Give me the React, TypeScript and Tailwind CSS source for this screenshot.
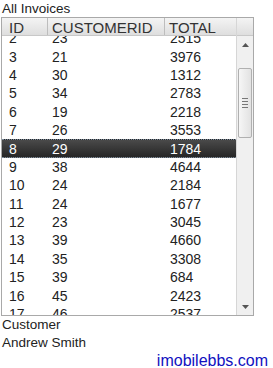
import React from 'react';

const rows: [number, number, number][] = [
  [2, 23, 2515],
  [3, 21, 3976],
  [4, 30, 1312],
  [5, 34, 2783],
  [6, 19, 2218],
  [7, 26, 3553],
  [8, 29, 1784],
  [9, 38, 4644],
  [10, 24, 2184],
  [11, 24, 1677],
  [12, 23, 3045],
  [13, 39, 4660],
  [14, 35, 3308],
  [15, 39, 684],
  [16, 45, 2423],
  [17, 46, 2537],
];

export default function App() {
  return (
    <div className="w-[273px] h-[368px] bg-white text-[#222] overflow-hidden font-['Liberation_Sans',Arial,sans-serif] text-[14px] leading-none">
      <div className="h-[17px] pl-[2px] pt-[1px] text-[13.5px] leading-[15px]">All Invoices</div>

      <div className="ml-[1px] w-[253px] h-[299px] border border-[#a9a9a9] flex">
        {/* table */}
        <div className="w-[234px] flex flex-col">
          <div className="h-[18px] flex bg-gradient-to-b from-[#f4f4f4] to-[#dedede] border-b border-[#c8c8c8] text-[15px] leading-[19px] text-[#333]">
            <div className="w-[46px] pl-[7px] border-r border-[#bdbdbd]">ID</div>
            <div className="w-[117px] pl-[4px] border-r border-[#bdbdbd]">CUSTOMERID</div>
            <div className="flex-1 pl-[4px]">TOTAL</div>
          </div>
          <div className="flex-1 overflow-hidden">
            <div className="-mt-[7px]">
              {rows.map(([id, cust, total]) => {
                const sel = id === 8;
                return (
                  <div
                    key={id}
                    className={
                      sel
                        ? 'h-[18.4px] flex items-center text-white bg-gradient-to-b from-[#4a4a4a] to-[#262626] border-y border-dotted border-[#7a8a9a]'
                        : 'h-[18.4px] flex items-center'
                    }
                  >
                    <div className="w-[46px] pl-[7px]">{id}</div>
                    <div className="w-[117px] pl-[4px]">{cust}</div>
                    <div className="flex-1 pl-[5px]">{total}</div>
                  </div>
                );
              })}
            </div>
          </div>
        </div>

        {/* scrollbar */}
        <div className="w-[17px] flex flex-col border-l border-[#d6d6d6] bg-[#f0f0f0]">
          <div className="h-[18px] bg-gradient-to-b from-[#f4f4f4] to-[#dedede] border-b border-[#c8c8c8]" />
          <div className="h-[17px] flex items-center justify-center">
            <svg width="7" height="4" viewBox="0 0 7 4">
              <path d="M3.5 0 L7 4 L0 4 Z" fill="#555" />
            </svg>
          </div>
          <div className="h-[15px]" />
          <div className="mx-[1px] h-[70px] rounded-[2px] border border-[#b0b0b0] bg-gradient-to-r from-[#f6f6f6] to-[#e2e2e2] flex flex-col items-center justify-center gap-[2px]">
            <div className="w-[6px] h-[1px] bg-[#777]" />
            <div className="w-[6px] h-[1px] bg-[#777]" />
            <div className="w-[6px] h-[1px] bg-[#777]" />
            <div className="w-[6px] h-[1px] bg-[#777]" />
          </div>
          <div className="flex-1" />
          <div className="h-[17px] flex items-center justify-center">
            <svg width="7" height="4" viewBox="0 0 7 4">
              <path d="M0 0 L7 0 L3.5 4 Z" fill="#555" />
            </svg>
          </div>
        </div>
      </div>

      <div className="pl-[2px] text-[13.5px] leading-[18px]">Customer</div>
      <div className="pl-[2px] text-[13.5px] leading-[18px]">Andrew Smith</div>
      <div className="flex justify-end pr-[5px] text-[16px] leading-[18px] text-[#1010c0]">imobilebbs.com</div>
    </div>
  );
}
